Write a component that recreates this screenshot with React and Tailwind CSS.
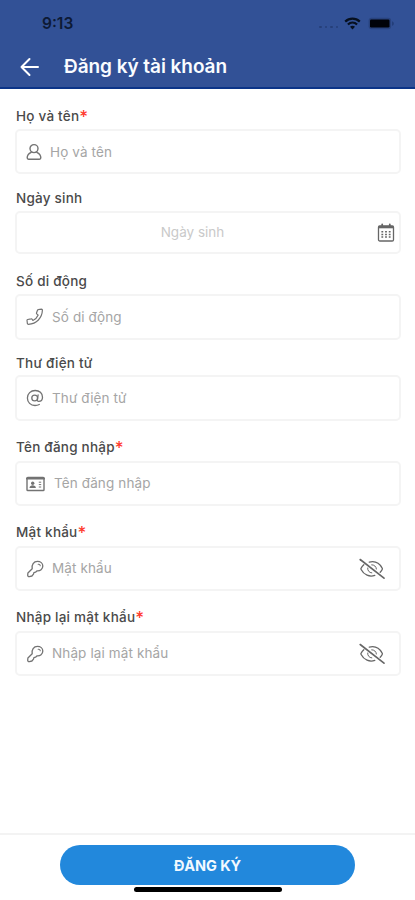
import React from "react";

function Svg({ children, className, box = "0 0 24 24", sw = 1.5 }) {
  return (
    <svg viewBox={box} className={className} fill="none" stroke="currentColor" strokeWidth={sw} strokeLinecap="round" strokeLinejoin="round">
      {children}
    </svg>
  );
}

const UserIcon = () => (
  <Svg box="0 0 16 18" className="h-[18px] w-4" sw={1.4}>
    <circle cx="8" cy="5.600" r="4" />
    <path d="M5.200 9.400C2.700 10.500 1.200 12.400 1.200 14.800c0 .9.4 1.400 1.300 1.400h11c.9 0 1.300-.5 1.300-1.400 0-2.400-1.500-4.300-4-5.400" />
  </Svg>
);

const PhoneIcon = () => (
  <Svg box="0 0 18 18" className="h-[18px] w-[18px]" sw={1.2}>
    <path d="m12.200 1.700 3.300-.5c.6 0 .9.3.9.9-.1 4-1.500 7.300-4 9.900-2.600 2.700-6 4.100-10.100 4.300-.5 0-.8-.2-.9-.6L1 12.300c0-.4.2-.7.6-.8l3.500-.7c.4-.1.7 0 .9.300l.9 1.400c2.300-1 4.300-3 5.300-5.400l-1.400-1.200c-.3-.2-.4-.6-.3-.9l1-2.800c.1-.3.4-.5.7-.5Z" />
  </Svg>
);

const AtIcon = () => (
  <Svg box="0 0 18 18" className="h-[18px] w-[18px]" sw={1.3}>
    <circle cx="8.700" cy="9" r="2.900" />
    <path d="m12.100 6-.7 4.600c-.2 1.200.3 1.800 1.200 1.800 2.100 0 3.900-1.600 3.900-4.200C16.500 4.200 13.400 1.500 9.200 1.500 4.700 1.500 1.400 4.700 1.400 9s3.200 7.500 7.600 7.500c1.600 0 3.100-.4 4.300-1" />
  </Svg>
);

const CardIcon = () => (
  <Svg box="0 0 19 16" className="h-4 w-[19px]" sw={1.4}>
    <rect x="1" y="1.500" width="17" height="13" rx=".8" />
    <path d="M1 2.500h17" strokeWidth="2.200" />
    <circle cx="6.700" cy="7.200" r="1.700" fill="currentColor" stroke="none" />
    <path d="M3.500 12c0-3.600 6.400-3.600 6.400 0Z" fill="currentColor" stroke="none" />
    <path d="M13.200 6.200h1.600M13.200 8.600h1.600M13.200 11h1.600" strokeWidth="1" />
  </Svg>
);

const KeyIcon = () => (
  <Svg box="0 0 18 18" className="h-[18px] w-[18px]" sw={1.3}>
    <path d="M6.200 8.800C5.400 4.800 7.700 1.400 11.400 1.400c3.100 0 5.400 1.900 5.400 4.700 0 3.300-2.600 5.100-5.900 4.800l-1.400 1.300-1.600.4-.4 1.500-1.600 1.900-2.500.6c-1.100.2-1.800-.5-1.700-1.500l.2-2.100 4.300-4.200Z" />
    <path d="M12.200 4.300c1.200-.2 2 .5 2 1.500" strokeWidth="1.100" />
  </Svg>
);

const CalendarIcon = () => (
  <Svg box="0 0 18 20" className="h-5 w-[18px]" sw={1.3}>
    <rect x="1.500" y="3" width="15" height="15" rx="1.300" />
    <path d="M1.500 4.100h15" strokeWidth="2.400" strokeLinecap="butt" />
    <path d="M5.200 1.500v2M12.800 1.500v2" strokeWidth="1.800" />
    <path d="M4.400 8.700h1.800M8.100 8.700h1.800M11.800 8.700h1.800M4.400 11.400h1.800M8.100 11.400h1.800M11.800 11.400h1.800M4.400 14.100h1.800M8.100 14.100h1.800M11.800 14.100h1.800" strokeWidth="1.500" strokeLinecap="butt" />
  </Svg>
);

const EyeOffIcon = () => (
  <Svg box="0 0 26 22" className="h-[22px] w-[26px]" sw={1.3}>
    <path d="m1.200 1.500 23.800 18.700" strokeWidth="1.600" />
    <path d="M10.300 4.100c5.400-1.300 10.300 1.200 12.900 6 .3.500.3.900 0 1.400-.5 1-1.200 1.900-2 2.700" />
    <path d="M4.800 6.700c-1.100 1-2 2.100-2.700 3.400-.3.500-.3.900 0 1.400 2.900 5.500 8.400 7.700 13.700 5.900" />
    <path d="M12.700 6.800c2.500-.1 4.600 1.800 4.700 4.200M8.700 10c-.3 2.600 1.500 4.700 4.100 4.900" strokeWidth="1" />
  </Svg>
);

function Field({ label, required, heightClass, boxClass, icon, trailing, placeholder, centered, textClass }) {
  return (
    <div className={heightClass}>
      <div className="flex h-[18px] items-center text-[13.5px] font-medium text-[#4a4a4a]">
        <span className="whitespace-nowrap tracking-[0.23px]">{label}</span>
        {required && <span className="translate-y-px text-[17px] font-medium leading-none text-[#ff3b30]">*</span>}
      </div>
      <div className={`-ml-px flex items-center rounded-[5px] border-2 border-[#f4f4f4] ${boxClass}`}>
        {icon && <span className="flex shrink-0 text-[#737373]">{icon}</span>}
        <span className={`flex-1 whitespace-nowrap text-[13.5px] ${centered ? "text-center text-[#c9c9c9]" : "tracking-[0.12px] text-[#a5a5a5]"} ${textClass}`}>
          {placeholder}
        </span>
        {trailing && <span className="flex shrink-0 text-[#666]">{trailing}</span>}
      </div>
    </div>
  );
}

export default function App() {
  return (
    <div className="flex h-[900px] w-[415px] flex-col overflow-hidden bg-white font-['Inter','Noto_Sans',sans-serif]">
      <header className="h-[89px] shrink-0 border-b-2 border-[#0b3488] bg-[#325196]">
        <div className="flex h-[46px] items-center pl-[42px] pr-[20px]">
          <span className="pt-px text-[15.5px] font-semibold leading-none text-[#0d1a35]">9:13</span>
          <div className="ml-auto flex items-center">
            <div className="mr-[6px] mt-[8px] flex gap-[3px]">
              <i className="h-[2px] w-[2.5px] rounded-full bg-[#263f78]" />
              <i className="h-[2px] w-[2.5px] rounded-full bg-[#263f78]" />
              <i className="h-[2px] w-[2.5px] rounded-full bg-[#263f78]" />
              <i className="h-[2px] w-[2.5px] rounded-full bg-[#263f78]" />
            </div>
            <svg viewBox="0 0 17 13" className="h-[13px] w-[17px]" fill="none" stroke="#07101f" strokeWidth="2.200">
              <path d="M1.200 4.600c4.200-4 10.400-4 14.600 0M3.900 7.500c2.700-2.500 6.500-2.500 9.200 0" />
              <path d="M6 9.800c1.500-1.300 3.500-1.300 5 0l-2.500 2.600Z" fill="#07101f" stroke="none" />
            </svg>
            <svg viewBox="0 0 27 13" className="ml-[7px] h-[13px] w-[27px]">
              <rect x=".6" y=".8" width="22.500" height="11.400" rx="3" fill="#29437e" />
              <rect x="2" y="2.500" width="19.500" height="8" rx="1.300" fill="#000208" />
              <path d="M24.200 4.200c2 .8 2 3.800 0 4.600Z" fill="#213b74" />
            </svg>
          </div>
        </div>
        <div className="flex h-[42px] items-center pl-[20px]">
          <svg viewBox="0 0 20 20" className="h-5 w-5 shrink-0" fill="none" stroke="white" strokeWidth="2" strokeLinecap="round" strokeLinejoin="round">
            <path d="M18 10H1.500M9.500 2 1.500 10l8 8" />
          </svg>
          <h1 className="ml-[24px] whitespace-nowrap pt-px text-[19px] font-semibold tracking-[-0.06px] text-[#fafcff]">Đăng ký tài khoản</h1>
        </div>
      </header>

      <main className="flex-1 pl-[16px] pr-[14px] pt-[18px]">
        <Field label="Họ và tên" required heightClass="h-[82px]" boxClass="mt-[4px] h-[45px] pl-[9px]" icon={<UserIcon />} textClass="ml-[8px] pt-px" placeholder="Họ và tên" />
        <Field label="Ngày sinh" heightClass="h-[83px]" boxClass="mt-[4px] h-[43px] pr-[4px]" textClass="pr-[9px]" centered placeholder="Ngày sinh" trailing={<CalendarIcon />} />
        <Field label="Số di động" heightClass="h-[82px]" boxClass="mt-[4px] h-[46px] pl-[9px]" icon={<PhoneIcon />} textClass="ml-[8px]" placeholder="Số di động" />
        <Field label="Thư điện tử" heightClass="h-[84px]" boxClass="mt-[3px] h-[46px] pl-[9px]" icon={<AtIcon />} textClass="ml-[8px]" placeholder="Thư điện tử" />
        <Field label="Tên đăng nhập" required heightClass="h-[85px]" boxClass="mt-[5px] h-[45px] pl-[9px]" icon={<CardIcon />} textClass="ml-[9px]" placeholder="Tên đăng nhập" />
        <Field label="Mật khẩu" required heightClass="h-[85px]" boxClass="mt-[5px] h-[45px] pl-[9px] pr-[14px]" icon={<KeyIcon />} textClass="ml-[8px]" placeholder="Mật khẩu" trailing={<EyeOffIcon />} />
        <Field label="Nhập lại mật khẩu" required heightClass="h-[68px]" boxClass="mt-[5px] h-[45px] pl-[9px] pr-[14px]" icon={<KeyIcon />} textClass="ml-[8px]" placeholder="Nhập lại mật khẩu" trailing={<EyeOffIcon />} />
      </main>

      <footer className="flex h-[67px] shrink-0 flex-col items-center border-t-2 border-[#f3f3f3] pt-[10px]">
        <button className="h-[40px] w-[295px] rounded-full bg-[#2288dc] pt-px text-[14.5px] font-bold tracking-[-0.1px] text-[#f2f9ff]">ĐĂNG KÝ</button>
        <div className="mt-[2px] h-[5px] w-[148px] rounded-full bg-black" />
      </footer>
    </div>
  );
}
